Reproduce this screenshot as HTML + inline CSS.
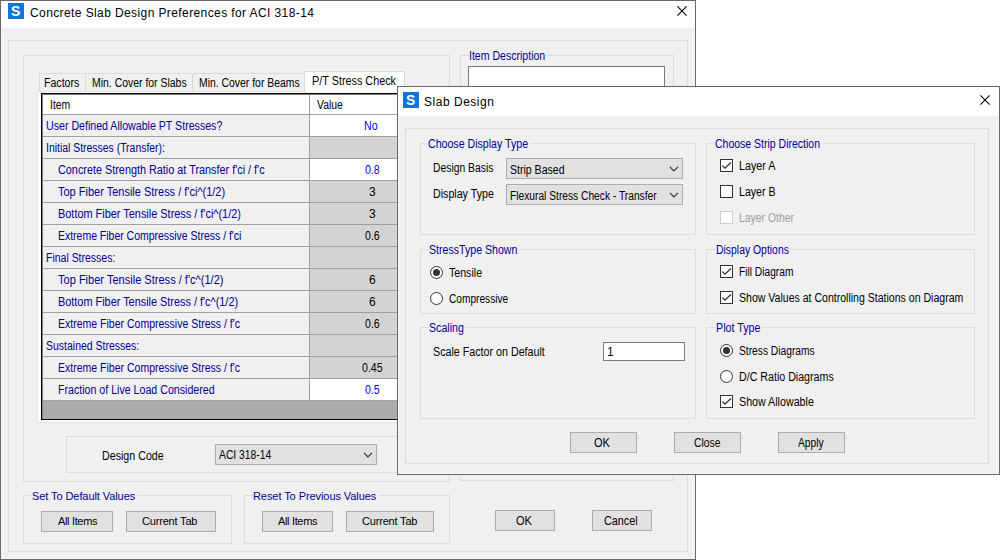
<!DOCTYPE html>
<html lang="en">
<head>
<meta charset="utf-8">
<title>Concrete Slab Design Preferences for ACI 318-14</title>
<style>
*{box-sizing:border-box;margin:0;padding:0}
html,body{width:1000px;height:560px;overflow:hidden;background:#fff}
body{font-family:"Liberation Sans",sans-serif;font-size:11px;color:#000;position:relative}
.abs,.win,.gb,.btn,.t,.cbx,.rbx,.combo,.tb,.tab,.ico,.ttl,.x,.cell{position:absolute}
.win{background:#f0f0f0;box-shadow:inset 0 0 0 1px #686868,inset 0 0 0 2px #f7f7f7}
.ico{width:16px;height:16px;background:#1073de;color:#fff;font-weight:bold;font-size:15px;line-height:16px;text-align:center}
.ico span{display:inline-block;transform:translateX(-.5px) scaleX(.92)}
.ttl{font-size:12px;white-space:nowrap;line-height:13px;height:13px}
.gb{border:1px solid #dcdcdc}
.t{white-space:nowrap;line-height:13px;height:13px;font-size:12px;transform-origin:0 0}
.btn{background:#e1e1e1;border:1px solid #adadad}
.combo{background:#e1e1e1;border:1px solid #adadad;height:21px}
.tb{background:#fff;border:1px solid #7a7a7a}
.cbx{width:13px;height:13px;border:1px solid #333;background:#fff}
.cbx.dis{border-color:#ccc;background:#fff}
.cbx svg{position:absolute;left:0;top:0}
.rbx{width:13px;height:13px;border:1px solid #333;border-radius:50%;background:#fff}
.rbx.on::after{content:"";position:absolute;left:2px;top:2px;width:7px;height:7px;border-radius:50%;background:#333}
.tab{border:1px solid #d9d9d9;border-bottom:none;background:#f0f0f0}
.tab.sel{background:#fff}
.cell{height:21px}
</style>
</head>
<body>

<!-- Window 1: Concrete Slab Design Preferences -->
<div id="w1" class="abs" style="left:0;top:0;width:0;height:0">
<div class="win" style="left:0px;top:0px;width:696px;height:560px"></div>
<div class="abs" style="left:1px;top:1px;width:694px;height:27px;background:#fff"></div>
<div class="ico" style="left:8px;top:3px"><span>S</span></div>
<div class="ttl" style="left:30px;top:7px;letter-spacing:0.4px">Concrete Slab Design Preferences for ACI 318-14</div>
<svg class="x" style="left:677px;top:6px" width="11" height="11" viewBox="0 0 11 11"><path d="M0.4 0.4 L9.6 9.6 M9.6 0.4 L0.4 9.6" stroke="#000" stroke-width="1.05" fill="none"/></svg>
<div class="gb" style="left:8px;top:40px;width:680px;height:512px"></div>
<div class="gb" style="left:23px;top:55px;width:427px;height:427px"></div>
<div class="gb" style="left:460px;top:55px;width:214px;height:426px"></div>
<div class="abs" style="left:469px;top:50px;width:77px;height:13px;background:#f0f0f0"></div><div class="t" style="left:469px;top:50px;transform:scaleX(0.8794);color:#000094">Item Description</div>
<div class="tb" style="left:468px;top:66px;width:197px;height:400px"></div>
<div class="tab" style="left:39px;top:73px;width:47px;height:19px"></div>
<div class="tab" style="left:85px;top:73px;width:108px;height:19px"></div>
<div class="tab" style="left:192px;top:73px;width:113px;height:19px"></div>
<div class="abs" style="left:37px;top:91px;width:402px;height:332px;background:#fff;border:1px solid #e3e3e3"></div>
<div class="tab sel" style="left:304px;top:71px;width:101px;height:22px"></div>
<div class="t" style="left:44px;top:77px;transform:scaleX(0.8821)">Factors</div>
<div class="t" style="left:92px;top:77px;transform:scaleX(0.8704)">Min. Cover for Slabs</div>
<div class="t" style="left:199px;top:77px;transform:scaleX(0.8674)">Min. Cover for Beams</div>
<div class="t" style="left:312px;top:75px;transform:scaleX(0.9022)">P/T Stress Check</div>
<div class="abs" style="left:41px;top:93px;width:394px;height:327px;background:#000"></div>
<div class="abs" style="left:42px;top:94px;width:393px;height:325px;background:#808080"></div>
<div class="abs" style="left:43px;top:95px;width:391px;height:324px;background:#ababab"></div>
<div class="abs" style="left:43px;top:95px;width:391px;height:306px;background:#a0a0a0"></div>
<div class="cell" style="left:43px;top:95px;width:266px;height:19px;background:#fff"></div>
<div class="cell" style="left:310px;top:95px;width:124px;height:19px;background:#fff"></div>
<div class="t" style="left:50px;top:99px;transform:scaleX(0.8636)">Item</div>
<div class="t" style="left:317px;top:99px;transform:scaleX(0.8667)">Value</div>
<div class="cell" style="left:43px;top:115px;width:266px;height:21px;background:#f0f0f0"></div>
<div class="cell" style="left:310px;top:115px;width:124px;height:21px;background:#fff"></div>
<div class="t" style="left:46px;top:120px;transform:scaleX(0.8851);color:#000094">User Defined Allowable PT Stresses?</div>
<div class="t" style="left:364px;top:120px;transform:scaleX(0.885);color:#0000ff">No</div>
<div class="cell" style="left:43px;top:137px;width:266px;height:21px;background:#f0f0f0"></div>
<div class="cell" style="left:310px;top:137px;width:124px;height:21px;background:#d3d3d3"></div>
<div class="t" style="left:46px;top:142px;transform:scaleX(0.8685);color:#000094">Initial Stresses (Transfer):</div>
<div class="cell" style="left:43px;top:159px;width:266px;height:21px;background:#f0f0f0"></div>
<div class="cell" style="left:310px;top:159px;width:124px;height:21px;background:#fff"></div>
<div class="t" style="left:58px;top:164px;transform:scaleX(0.9035);color:#000094">Concrete Strength Ratio at Transfer f'ci / f'c</div>
<div class="t" style="left:365px;top:164px;transform:scaleX(0.885);color:#0000ff">0.8</div>
<div class="cell" style="left:43px;top:181px;width:266px;height:21px;background:#f0f0f0"></div>
<div class="cell" style="left:310px;top:181px;width:124px;height:21px;background:#d3d3d3"></div>
<div class="t" style="left:58px;top:186px;transform:scaleX(0.9162);color:#000094">Top Fiber Tensile Stress / f'ci^(1/2)</div>
<div class="t" style="left:369px;top:186px">3</div>
<div class="cell" style="left:43px;top:203px;width:266px;height:21px;background:#f0f0f0"></div>
<div class="cell" style="left:310px;top:203px;width:124px;height:21px;background:#d3d3d3"></div>
<div class="t" style="left:58px;top:208px;transform:scaleX(0.9095);color:#000094">Bottom Fiber Tensile Stress / f'ci^(1/2)</div>
<div class="t" style="left:369px;top:208px">3</div>
<div class="cell" style="left:43px;top:225px;width:266px;height:21px;background:#f0f0f0"></div>
<div class="cell" style="left:310px;top:225px;width:124px;height:21px;background:#d3d3d3"></div>
<div class="t" style="left:58px;top:230px;transform:scaleX(0.872);color:#000094">Extreme Fiber Compressive Stress / f'ci</div>
<div class="t" style="left:365px;top:230px;transform:scaleX(0.885)">0.6</div>
<div class="cell" style="left:43px;top:247px;width:266px;height:21px;background:#f0f0f0"></div>
<div class="cell" style="left:310px;top:247px;width:124px;height:21px;background:#d3d3d3"></div>
<div class="t" style="left:46px;top:252px;transform:scaleX(0.8734);color:#000094">Final Stresses:</div>
<div class="cell" style="left:43px;top:269px;width:266px;height:21px;background:#f0f0f0"></div>
<div class="cell" style="left:310px;top:269px;width:124px;height:21px;background:#d3d3d3"></div>
<div class="t" style="left:58px;top:274px;transform:scaleX(0.9204);color:#000094">Top Fiber Tensile Stress / f'c^(1/2)</div>
<div class="t" style="left:369px;top:274px">6</div>
<div class="cell" style="left:43px;top:291px;width:266px;height:21px;background:#f0f0f0"></div>
<div class="cell" style="left:310px;top:291px;width:124px;height:21px;background:#d3d3d3"></div>
<div class="t" style="left:58px;top:296px;transform:scaleX(0.9074);color:#000094">Bottom Fiber Tensile Stress / f'c^(1/2)</div>
<div class="t" style="left:369px;top:296px">6</div>
<div class="cell" style="left:43px;top:313px;width:266px;height:21px;background:#f0f0f0"></div>
<div class="cell" style="left:310px;top:313px;width:124px;height:21px;background:#d3d3d3"></div>
<div class="t" style="left:58px;top:318px;transform:scaleX(0.8762);color:#000094">Extreme Fiber Compressive Stress / f'c</div>
<div class="t" style="left:365px;top:318px;transform:scaleX(0.885)">0.6</div>
<div class="cell" style="left:43px;top:335px;width:266px;height:21px;background:#f0f0f0"></div>
<div class="cell" style="left:310px;top:335px;width:124px;height:21px;background:#d3d3d3"></div>
<div class="t" style="left:46px;top:340px;transform:scaleX(0.8738);color:#000094">Sustained Stresses:</div>
<div class="cell" style="left:43px;top:357px;width:266px;height:21px;background:#f0f0f0"></div>
<div class="cell" style="left:310px;top:357px;width:124px;height:21px;background:#d3d3d3"></div>
<div class="t" style="left:58px;top:362px;transform:scaleX(0.8762);color:#000094">Extreme Fiber Compressive Stress / f'c</div>
<div class="t" style="left:362px;top:362px;transform:scaleX(0.885)">0.45</div>
<div class="cell" style="left:43px;top:379px;width:266px;height:21px;background:#f0f0f0"></div>
<div class="cell" style="left:310px;top:379px;width:124px;height:21px;background:#fff"></div>
<div class="t" style="left:58px;top:384px;transform:scaleX(0.8857);color:#000094">Fraction of Live Load Considered</div>
<div class="t" style="left:365px;top:384px;transform:scaleX(0.885);color:#0000ff">0.5</div>
<div class="gb" style="left:66px;top:436px;width:340px;height:37px"></div>
<div class="t" style="left:102px;top:450px;transform:scaleX(0.8897)">Design Code</div>
<div class="combo" style="left:215px;top:444px;width:162px;height:21px"></div>
<div class="t" style="left:219px;top:449px;transform:scaleX(0.8607)">ACI 318-14</div>
<svg class="x" style="left:363px;top:452px" width="10" height="7" viewBox="0 0 10 7"><path d="M0.9 0.9 L4.95 4.9 L9 0.9" stroke="#333" stroke-width="1.2" fill="none"/></svg>
<div class="gb" style="left:23px;top:495px;width:209px;height:49px"></div>
<div class="abs" style="left:31px;top:490px;width:106px;height:13px;background:#f0f0f0"></div><div class="t" style="left:32px;top:490px;letter-spacing:-0.08px;font-size:11px;color:#000094">Set To Default Values</div>
<div class="btn" style="left:41px;top:511px;width:72px;height:21px"></div>
<div class="t" style="left:58px;top:515px;letter-spacing:-0.34px;font-size:11px">All Items</div>
<div class="btn" style="left:126px;top:511px;width:90px;height:21px"></div>
<div class="t" style="left:142px;top:515px;letter-spacing:-0.18px;font-size:11px">Current Tab</div>
<div class="gb" style="left:244px;top:495px;width:206px;height:49px"></div>
<div class="abs" style="left:253px;top:490px;width:126px;height:13px;background:#f0f0f0"></div><div class="t" style="left:253px;top:490px;letter-spacing:-0.07px;font-size:11px;color:#000094">Reset To Previous Values</div>
<div class="btn" style="left:262px;top:511px;width:71px;height:21px"></div>
<div class="t" style="left:278px;top:515px;letter-spacing:-0.34px;font-size:11px">All Items</div>
<div class="btn" style="left:346px;top:511px;width:88px;height:21px"></div>
<div class="t" style="left:362px;top:515px;letter-spacing:-0.18px;font-size:11px">Current Tab</div>
<div class="btn" style="left:495px;top:510px;width:60px;height:21px"></div>
<div class="t" style="left:516px;top:515px;transform:scaleX(0.9176)">OK</div>
<div class="btn" style="left:592px;top:510px;width:60px;height:21px"></div>
<div class="t" style="left:604px;top:515px;transform:scaleX(0.9)">Cancel</div>
</div>

<!-- Window 2: Slab Design -->
<div id="w2" class="abs" style="left:0;top:0;width:0;height:0">
<div class="win" style="left:397px;top:86px;width:603px;height:389px"></div>
<div class="abs" style="left:398px;top:87px;width:601px;height:29px;background:#fff"></div>
<div class="ico" style="left:403px;top:92px"><span>S</span></div>
<div class="ttl" style="left:424px;top:96px;letter-spacing:0.52px">Slab Design</div>
<svg class="x" style="left:980px;top:95px" width="11" height="11" viewBox="0 0 11 11"><path d="M0.4 0.4 L9.6 9.6 M9.6 0.4 L0.4 9.6" stroke="#000" stroke-width="1.05" fill="none"/></svg>
<div class="gb" style="left:405px;top:128px;width:584px;height:336px"></div>
<div class="gb" style="left:420px;top:143px;width:276px;height:92px"></div>
<div class="abs" style="left:427px;top:138px;width:103px;height:13px;background:#f0f0f0"></div><div class="t" style="left:428px;top:138px;transform:scaleX(0.8845);color:#000094">Choose Display Type</div>
<div class="t" style="left:433px;top:162px;transform:scaleX(0.8623)">Design Basis</div>
<div class="combo" style="left:506px;top:158px;width:177px;height:21px"></div>
<div class="t" style="left:510px;top:164px;transform:scaleX(0.8792)">Strip Based</div>
<svg class="x" style="left:669px;top:166px" width="10" height="7" viewBox="0 0 10 7"><path d="M0.9 0.9 L4.95 4.9 L9 0.9" stroke="#333" stroke-width="1.2" fill="none"/></svg>
<div class="t" style="left:433px;top:188px;transform:scaleX(0.8881)">Display Type</div>
<div class="combo" style="left:506px;top:184px;width:177px;height:21px"></div>
<div class="t" style="left:510px;top:190px;transform:scaleX(0.8523)">Flexural Stress Check - Transfer</div>
<svg class="x" style="left:669px;top:192px" width="10" height="7" viewBox="0 0 10 7"><path d="M0.9 0.9 L4.95 4.9 L9 0.9" stroke="#333" stroke-width="1.2" fill="none"/></svg>
<div class="gb" style="left:420px;top:249px;width:276px;height:65px"></div>
<div class="abs" style="left:429px;top:244px;width:90px;height:13px;background:#f0f0f0"></div><div class="t" style="left:429px;top:244px;transform:scaleX(0.8838);color:#000094">StressType Shown</div>
<div class="rbx on" style="left:430px;top:266px;width:13px;height:13px"></div>
<div class="t" style="left:449px;top:267px;transform:scaleX(0.8851)">Tensile</div>
<div class="rbx" style="left:430px;top:292px;width:13px;height:13px"></div>
<div class="t" style="left:449px;top:293px;transform:scaleX(0.8464)">Compressive</div>
<div class="gb" style="left:420px;top:327px;width:276px;height:92px"></div>
<div class="abs" style="left:429px;top:322px;width:36px;height:13px;background:#f0f0f0"></div><div class="t" style="left:429px;top:322px;transform:scaleX(0.8842);color:#000094">Scaling</div>
<div class="t" style="left:433px;top:346px;transform:scaleX(0.8919)">Scale Factor on Default</div>
<div class="tb" style="left:603px;top:342px;width:82px;height:19px"></div>
<div class="t" style="left:607px;top:346px">1</div>
<div class="gb" style="left:706px;top:143px;width:269px;height:92px"></div>
<div class="abs" style="left:714px;top:138px;width:108px;height:13px;background:#f0f0f0"></div><div class="t" style="left:715px;top:138px;transform:scaleX(0.875);color:#000094">Choose Strip Direction</div>
<div class="cbx" style="left:720px;top:159px;width:13px;height:13px"><svg width="11" height="11" viewBox="0 0 11 11"><path d="M1.4 5.6 L4 8.2 L9.9 2.5" stroke="#333" stroke-width="1.3" fill="none"/></svg></div>
<div class="t" style="left:739px;top:160px;transform:scaleX(0.895)">Layer A</div>
<div class="cbx" style="left:720px;top:185px;width:13px;height:13px"></div>
<div class="t" style="left:739px;top:186px;transform:scaleX(0.8825)">Layer B</div>
<div class="cbx dis" style="left:720px;top:211px;width:13px;height:13px"></div>
<div class="t" style="left:739px;top:212px;transform:scaleX(0.8677);color:#a0a0a0">Layer Other</div>
<div class="gb" style="left:706px;top:249px;width:269px;height:65px"></div>
<div class="abs" style="left:715px;top:244px;width:75px;height:13px;background:#f0f0f0"></div><div class="t" style="left:716px;top:244px;transform:scaleX(0.8675);color:#000094">Display Options</div>
<div class="cbx" style="left:720px;top:265px;width:13px;height:13px"><svg width="11" height="11" viewBox="0 0 11 11"><path d="M1.4 5.6 L4 8.2 L9.9 2.5" stroke="#333" stroke-width="1.3" fill="none"/></svg></div>
<div class="t" style="left:739px;top:266px;transform:scaleX(0.85)">Fill Diagram</div>
<div class="cbx" style="left:720px;top:291px;width:13px;height:13px"><svg width="11" height="11" viewBox="0 0 11 11"><path d="M1.4 5.6 L4 8.2 L9.9 2.5" stroke="#333" stroke-width="1.3" fill="none"/></svg></div>
<div class="t" style="left:739px;top:292px;transform:scaleX(0.8787)">Show Values at Controlling Stations on Diagram</div>
<div class="gb" style="left:706px;top:327px;width:269px;height:92px"></div>
<div class="abs" style="left:715px;top:322px;width:47px;height:13px;background:#f0f0f0"></div><div class="t" style="left:716px;top:322px;transform:scaleX(0.8918);color:#000094">Plot Type</div>
<div class="rbx on" style="left:720px;top:344px;width:13px;height:13px"></div>
<div class="t" style="left:739px;top:345px;transform:scaleX(0.8534)">Stress Diagrams</div>
<div class="rbx" style="left:720px;top:370px;width:13px;height:13px"></div>
<div class="t" style="left:739px;top:371px;transform:scaleX(0.8877)">D/C Ratio Diagrams</div>
<div class="cbx" style="left:720px;top:395px;width:13px;height:13px"><svg width="11" height="11" viewBox="0 0 11 11"><path d="M1.4 5.6 L4 8.2 L9.9 2.5" stroke="#333" stroke-width="1.3" fill="none"/></svg></div>
<div class="t" style="left:739px;top:396px;transform:scaleX(0.8904)">Show Allowable</div>
<div class="btn" style="left:570px;top:432px;width:67px;height:21px"></div>
<div class="t" style="left:594px;top:437px;transform:scaleX(0.9176)">OK</div>
<div class="btn" style="left:674px;top:432px;width:67px;height:21px"></div>
<div class="t" style="left:694px;top:437px;transform:scaleX(0.86)">Close</div>
<div class="btn" style="left:778px;top:432px;width:67px;height:21px"></div>
<div class="t" style="left:798px;top:437px;transform:scaleX(0.8567)">Apply</div>
</div>
</body>
</html>
